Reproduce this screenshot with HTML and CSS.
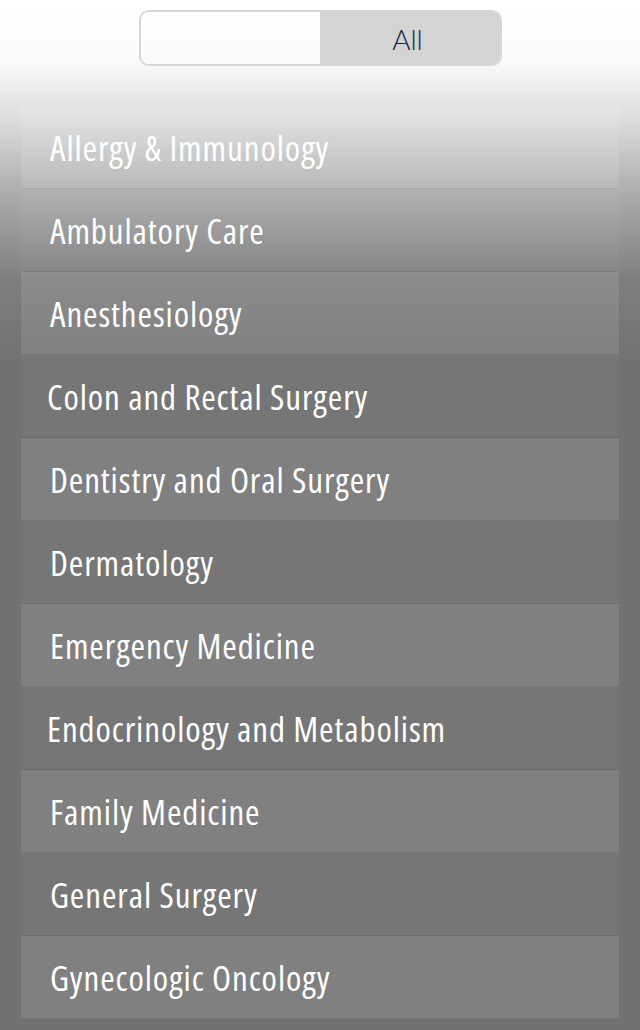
FILE: index.html
```html
<!DOCTYPE html>
<html>
<head>
<meta charset="utf-8">
<link rel="stylesheet" href="styles.css">
</head>
<body>
<div class="page">
  <div class="top">
    <div class="segmented">
      <div class="seg seg-empty"></div>
      <div class="seg seg-all">All</div>
    </div>
  </div>
  <ul class="list">
    <li class="row">Allergy &amp; Immunology</li>
    <li class="row">Ambulatory Care</li>
    <li class="row">Anesthesiology</li>
    <li class="row shift">Colon and Rectal Surgery</li>
    <li class="row">Dentistry and Oral Surgery</li>
    <li class="row">Dermatology</li>
    <li class="row">Emergency Medicine</li>
    <li class="row shift">Endocrinology and Metabolism</li>
    <li class="row">Family Medicine</li>
    <li class="row">General Surgery</li>
    <li class="row">Gynecologic Oncology</li>
  </ul>
</div>
</body>
</html>
```

FILE: styles.css
```css
html, body {
  margin: 0;
  padding: 0;
}
body {
  width: 640px;
  height: 1030px;
  overflow: hidden;
  background: linear-gradient(to bottom, #ffffff 0px, #fbfbfb 60px, #e2e2e2 110px, #a9a9a9 200px, #7e7e7e 280px, #727272 360px, #727272 1030px);
}
.page {
  display: flex;
  flex-direction: column;
}
.top {
  display: flex;
  justify-content: center;
  padding-top: 10px;
  height: 106px;
  box-sizing: border-box;
}
.segmented {
  display: flex;
  width: 363px;
  height: 56px;
  border: 2px solid #d6d6d6;
  border-radius: 10px;
  box-sizing: border-box;
  overflow: hidden;
}
.seg {
  display: flex;
  align-items: center;
  justify-content: center;
}
.seg-empty {
  width: 179px;
  background: linear-gradient(#ffffff, #fafafa);
}
.seg-all {
  flex: 1;
  background: #d4d4d4;
  color: #1c2847;
  font-family: "Lato", sans-serif;
  font-weight: 300;
  font-size: 28px;
  padding-top: 1px;
  padding-right: 4px;
}
.list {
  list-style: none;
  margin: 0 21px;
  padding: 0;
}
.row {
  height: 83px;
  box-sizing: border-box;
  border-bottom: 1px solid rgba(0, 0, 0, 0.08);
  display: flex;
  align-items: center;
  padding: 0 0 0 29px;
  color: #ffffff;
  font-family: "Open Sans", sans-serif;
  font-stretch: 75%;
  font-size: 35px;
  letter-spacing: 0.9px;
  background: rgba(255, 255, 255, 0.1);
}
.row:nth-child(even) {
  background: rgba(255, 255, 255, 0.035);
}
.row.shift {
  padding-left: 26px;
}
```
